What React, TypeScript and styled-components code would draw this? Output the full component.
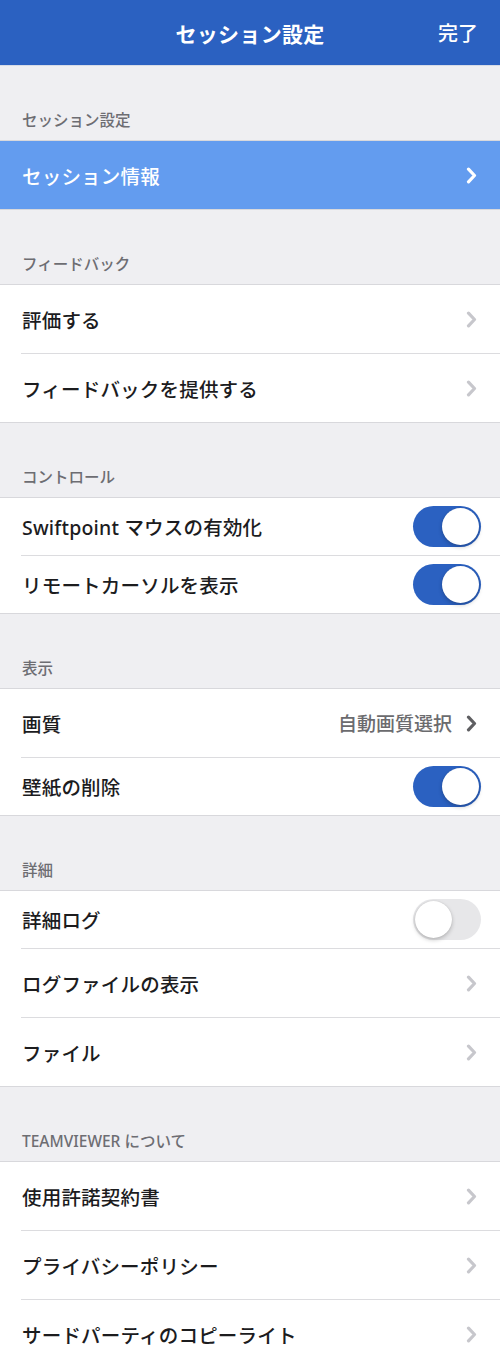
import styled, { createGlobalStyle } from "styled-components";

const GlobalStyle = createGlobalStyle`
  html, body {
    margin: 0;
    padding: 0;
    background: #efeff2;
  }
  body {
    font-family: "Noto Sans", "Noto Sans CJK JP", sans-serif;
    -webkit-font-smoothing: antialiased;
  }
`;

const Page = styled.div`
  width: 500px;
  min-height: 1365px;
  background: #efeff2;
`;

const NavBar = styled.header`
  height: 65px;
  background: #2b61c1;
  border-bottom: 1px solid #d6dbe6;
  display: grid;
  grid-template-columns: 1fr auto 1fr;
  align-items: center;
  color: #fff;
`;

const NavTitle = styled.h1`
  grid-column: 2;
  margin: 0;
  font-size: 21px;
  font-weight: 700;
  letter-spacing: 0.3px;
`;

const NavDone = styled.button`
  grid-column: 3;
  justify-self: end;
  margin-right: 22px;
  padding: 0;
  border: none;
  background: none;
  color: #fff;
  font-family: inherit;
  font-size: 20px;
  font-weight: 500;
`;

const SectionHeader = styled.div`
  height: 74px;
  display: flex;
  align-items: flex-end;
  padding: 0 0 10px 22px;
  box-sizing: border-box;
  font-size: 15.5px;
  font-weight: 500;
  line-height: 20px;
  color: #6d6d72;
`;

const Group = styled.div`
  background: #fff;
  border-top: 1px solid #d8d8dc;
  border-bottom: 1px solid #d8d8dc;
`;

const Row = styled.div<{ $short?: boolean; $active?: boolean }>`
  height: ${(p) => (p.$short ? 57 : 68)}px;
  display: flex;
  align-items: center;
  padding: 0 23px 0 22px;
  background: ${(p) => (p.$active ? "#639cef" : "#fff")};
  color: ${(p) => (p.$active ? "#fff" : "#1c1c1e")};
  & + & {
    border-top: 1px solid #dcdcdf;
    margin-left: 21px;
    padding-left: 1px;
  }
`;

const Label = styled.span`
  flex: 1;
  font-size: 19.5px;
  font-weight: 500;
  letter-spacing: 0.2px;
`;

const Value = styled.span`
  font-size: 19px;
  font-weight: 500;
  color: #6b6b6e;
  margin-right: 14px;
`;

const Track = styled.div<{ $on: boolean }>`
  width: 68px;
  height: 41px;
  border-radius: 21px;
  margin-right: -4px;
  box-sizing: border-box;
  padding: 2px;
  display: flex;
  justify-content: ${(p) => (p.$on ? "flex-end" : "flex-start")};
  background: ${(p) => (p.$on ? "#2b61c1" : "#e7e7e9")};
`;

const Knob = styled.div`
  width: 37px;
  height: 37px;
  border-radius: 50%;
  background: #fff;
  box-shadow: 0 2px 4px rgba(0, 0, 0, 0.22), 0 0 1px rgba(0, 0, 0, 0.15);
`;

function Chevron({ color }: { color: string }) {
  return (
    <svg width="11" height="17" viewBox="0 0 11 17">
      <path
        d="M2.5 2.2 L8.5 8.5 L2.5 14.8"
        fill="none"
        stroke={color}
        strokeWidth="3.2"
        strokeLinecap="round"
        strokeLinejoin="round"
      />
    </svg>
  );
}

function Toggle({ on }: { on: boolean }) {
  return (
    <Track $on={on}>
      <Knob />
    </Track>
  );
}

interface IItem {
  label: string;
  kind: "nav" | "toggle";
  on?: boolean;
  value?: string;
  active?: boolean;
}

interface ISection {
  title: string;
  items: IItem[];
}

const sections: ISection[] = [
  {
    title: "セッション設定",
    items: [{ label: "セッション情報", kind: "nav", active: true }],
  },
  {
    title: "フィードバック",
    items: [
      { label: "評価する", kind: "nav" },
      { label: "フィードバックを提供する", kind: "nav" },
    ],
  },
  {
    title: "コントロール",
    items: [
      { label: "Swiftpoint マウスの有効化", kind: "toggle", on: true },
      { label: "リモートカーソルを表示", kind: "toggle", on: true },
    ],
  },
  {
    title: "表示",
    items: [
      { label: "画質", kind: "nav", value: "自動画質選択" },
      { label: "壁紙の削除", kind: "toggle", on: true },
    ],
  },
  {
    title: "詳細",
    items: [
      { label: "詳細ログ", kind: "toggle", on: false },
      { label: "ログファイルの表示", kind: "nav" },
      { label: "ファイル", kind: "nav" },
    ],
  },
  {
    title: "TEAMVIEWER について",
    items: [
      { label: "使用許諾契約書", kind: "nav" },
      { label: "プライバシーポリシー", kind: "nav" },
      { label: "サードパーティのコピーライト", kind: "nav" },
    ],
  },
];

export default function App() {
  return (
    <Page>
      <GlobalStyle />
      <NavBar>
        <NavTitle>セッション設定</NavTitle>
        <NavDone>完了</NavDone>
      </NavBar>
      {sections.map((s) => (
        <div key={s.title}>
          <SectionHeader>{s.title}</SectionHeader>
          <Group>
            {s.items.map((it) => (
              <Row key={it.label} $short={it.kind === "toggle"} $active={it.active}>
                <Label>{it.label}</Label>
                {it.value && <Value>{it.value}</Value>}
                {it.kind === "toggle" ? (
                  <Toggle on={!!it.on} />
                ) : (
                  <Chevron
                    color={it.active ? "#ffffff" : it.value ? "#5f5f62" : "#c7c7cc"}
                  />
                )}
              </Row>
            ))}
          </Group>
        </div>
      ))}
    </Page>
  );
}
